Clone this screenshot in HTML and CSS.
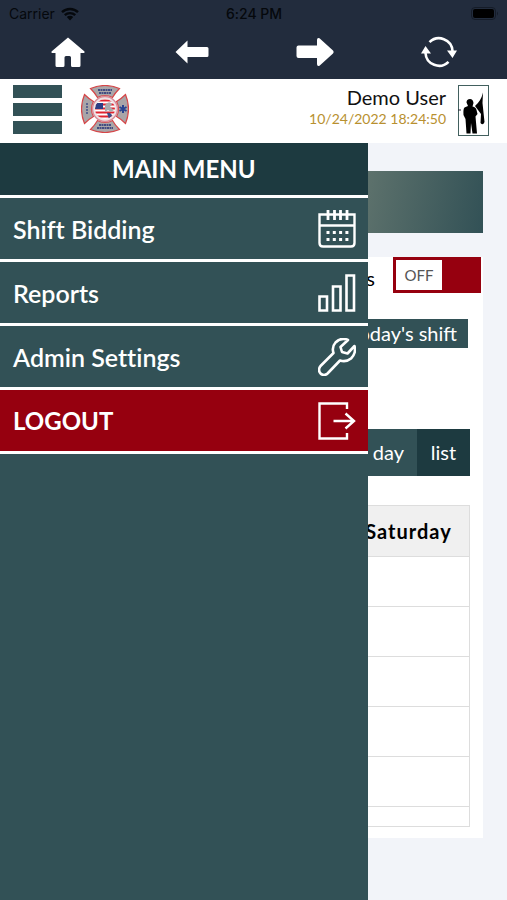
FILE: index.html
```html
<!DOCTYPE html>
<html lang="en">

<head>
    <meta charset="utf-8">
    <meta name="viewport" content="width=device-width, initial-scale=1">
    <title>Shift Calendar</title>
    <link rel="stylesheet" href="styles.css">
</head>

<body>

    <div class="statusbar">
        <div class="carrier">
            <span>Carrier</span>
            <svg width="18" height="14" viewBox="0 0 18 14">
                <path d="M1 5.2a11.5 11.5 0 0 1 16 0M3.8 8.2a7.5 7.5 0 0 1 10.4 0" fill="none" stroke="#05080c" stroke-width="2.4"/>
                <path d="M5.8 10.1a4.6 4.6 0 0 1 6.4 0L9 13.4z" fill="#05080c"/>
            </svg>
        </div>
        <div class="clock">6:24 PM</div>
        <div class="battery">
            <svg width="28" height="13" viewBox="0 0 28 13">
                <rect x="0.5" y="0.5" width="24" height="12" rx="3.5" fill="none" stroke="#151c28"/>
                <rect x="2" y="2" width="21" height="9" rx="2" fill="#000"/>
                <path d="M26 4.5q2 2 0 4z" fill="#151c28"/>
            </svg>
        </div>
    </div>

    <nav class="toolbar">
        <button aria-label="Home">
            <svg width="34" height="30" viewBox="0 0 34 30">
                <path d="M17 0.5L0.5 14.5Q0 16 1.5 16H4.500V28.500Q4.500 30 6 30H12Q13.500 30 13.500 28.500V20.500Q13.500 19 15 19H18.500Q20 19 20 20.500V28.500Q20 30 21.500 30H28Q29.500 30 29.500 28.500V16H32.500Q34 16 33.500 14.500z" fill="#fff"/>
            </svg>
        </button>
        <button aria-label="Back">
            <svg width="34" height="24" viewBox="0 0 34 24">
                <path d="M0.500 12L12.500 0.500V7H32Q33.500 7 33.500 8.500V15.500Q33.500 17 32 17H12.500V23.500z" fill="#fff"/>
            </svg>
        </button>
        <button aria-label="Forward">
            <svg width="38" height="30" viewBox="0 0 38 30">
                <path d="M37 13.600L23.500 1.300Q21 0.500 21 3V8.500H2.500Q0.500 8.500 0.500 10.500V19Q0.500 21 2.500 21H21V27Q21 29.500 23.500 28.700L37 16.400Q38.200 15 37 13.600z" fill="#fff"/>
            </svg>
        </button>
        <button aria-label="Reload">
            <svg width="36" height="32" viewBox="0 0 36 32">
                <path d="M8.500 6.200A13.500 13.500 0 0 1 31.500 15M27.500 25.800A13.500 13.500 0 0 1 4.500 17" fill="none" stroke="#fff" stroke-width="2.600"/>
                <path d="M26 14.500H36L31.500 22zM0 17.500H10L4.500 10z" fill="#fff"/>
            </svg>
        </button>
    </nav>

    <header class="topbar">
        <button class="burger" aria-label="Menu">
            <span></span>
            <span></span>
            <span></span>
        </button>
        <!-- fire department cross -->
        <svg class="emblem" width="48" height="48" viewBox="0 0 48 48">
            <defs>
                <path id="arm" d="M9.500 3.500Q24 -2.500 38.500 3.500Q34 8 31.500 12.500Q24 8.500 16.500 12.500Q14 8 9.500 3.500z"/>
                <clipPath id="disc"><circle cx="24" cy="24" r="10"/></clipPath>
            </defs>
            <g fill="#a9a5a8" stroke="#d64547" stroke-width="1.200">
                <use href="#arm"/>
                <use href="#arm" transform="rotate(90 24 24)"/>
                <use href="#arm" transform="rotate(180 24 24)"/>
                <use href="#arm" transform="rotate(270 24 24)"/>
            </g>
            <circle cx="24" cy="24" r="12.500" fill="#eee3e6" stroke="#d98c98" stroke-width="1.500"/>
            <g clip-path="url(#disc)">
                <rect x="14" y="14" width="20" height="20" fill="#fff"/>
                <path d="M14 15.500H34M14 19.500H34M14 23.500H34M14 27.500H34M14 31.500H34" stroke="#e02430" stroke-width="2"/>
                <rect x="14" y="18" width="8" height="6" fill="#2b3d84"/>
                <path d="M24 20q4-5 7-1l-2 3 4 3-3 2-3-2-3 2z" fill="#a9a9ac"/>
                <path d="M26 28q4-1 5 3l-3 3z" fill="#3c4a86"/>
            </g>
            <path d="M17 5H31M18 8H30M18 40H30M16 43H32" stroke="#434d82" stroke-width="2" stroke-dasharray="2 0.500"/>
            <path d="M6 18V30" stroke="#5c648f" stroke-width="2" stroke-dasharray="2 1"/>
            <path d="M42 20V28M38.500 22L45.500 26M38.500 26L45.500 22" stroke="#2a4491" stroke-width="2"/>
        </svg>
        <div class="user">
            <div class="username">Demo User</div>
            <div class="datetime">10/24/2022 18:24:50</div>
        </div>
        <svg class="profile" width="31" height="51" viewBox="0 0 31 51">
            <rect x="0.500" y="0.500" width="30" height="50" fill="#fff" stroke="#42605e"/>
            <path d="M8.500 17.500Q8.500 14 12 14Q15 14 15.500 18L14.500 21.500Q18 22 18.500 25L19.500 29L17.500 31.500L19 48.500H14.500L13 38L12.500 48.500H8.500L7.500 34L5.500 30Q5 24 6.500 22.500L10 21z" fill="#000"/>
            <path d="M25 7.500L24.500 18L26.500 37Q25 41 22.500 38L23 29L17 21Q23 16 25 7.500z" fill="#000"/>
            <path d="M0 25H3" stroke="#223"/>
        </svg>
    </header>

    <main class="page">

        <div class="banner"></div>

        <section class="card">
            <div class="switch-row">
                <label for="shifts">My Shifts</label>
                <button class="switch" id="shifts" role="switch" aria-checked="false"><span>OFF</span></button>
            </div>
            <div class="today-row">
                <button class="today">Today's shift</button>
            </div>
            <div class="views">
                <button>day</button>
                <button class="active">list</button>
            </div>
            <table class="calendar">
                <thead>
                    <tr>
                        <th></th>
                        <th class="dayname">Saturday</th>
                    </tr>
                </thead>
                <tbody>
                    <tr><td></td><td></td></tr>
                    <tr><td></td><td></td></tr>
                    <tr><td></td><td></td></tr>
                    <tr><td></td><td></td></tr>
                    <tr><td></td><td></td></tr>
                    <tr class="last"><td></td><td></td></tr>
                </tbody>
            </table>
        </section>

        <!-- slide out menu -->
        <aside class="menu">
            <h2>MAIN MENU</h2>
            <a href="#">
                <span>Shift Bidding</span>
                <svg width="38" height="38" viewBox="0 0 38 38" fill="none" stroke="#fff" stroke-width="2.400">
                    <path d="M1.500 4.500H36.500V33Q36.500 36.500 33 36.500H5Q1.500 36.500 1.500 33zM1 15.500H37"/>
                    <path d="M10 0V10M16.500 0V10M22.500 0V10M29 0V10" stroke-width="2.800"/>
                    <path d="M8.500 22.500H30.500M8.500 29.500H30.500" stroke-width="3" stroke-dasharray="3 3.300"/>
                </svg>
            </a>
            <a href="#">
                <span>Reports</span>
                <svg width="38" height="38" viewBox="0 0 38 38" fill="none" stroke="#fff" stroke-width="2.600">
                    <path d="M1.500 22.500H9V36.500H1.500zM15 12.500H22.500V36.500H15zM28.500 1.500H36V36.500H28.500z"/>
                </svg>
            </a>
            <a href="#">
                <span>Admin Settings</span>
                <svg width="38" height="38" viewBox="0 0 38 38" fill="none" stroke="#fff" stroke-width="2.600" stroke-linejoin="round">
                    <path d="M30 2Q23-1 17.500 4.500Q13.500 9 15.500 15L2.500 28Q-0.500 32 2.500 35.500Q6 38.500 9.500 35.500L22 22.500Q28 24.500 33 20.500Q38.500 15 36.500 8L29.500 15.500L24 14L22.500 9z"/>
                </svg>
            </a>
            <a href="#" class="logout">
                <span>LOGOUT</span>
                <svg width="38" height="38" viewBox="0 0 38 38" fill="none" stroke="#fff" stroke-width="2.400">
                    <path d="M29 7V1.500H1.500V36.500H29V31M15.500 19H36M27.500 11.500L36 19L27.500 26.500"/>
                </svg>
            </a>
        </aside>

    </main>

</body>

</html>
```

FILE: styles.css
```css
* {
    box-sizing: border-box;
}

body {
    margin: 0;
    min-height: 100vh;
    display: flex;
    flex-direction: column;
    font-family: Lato, sans-serif;
    font-variant-ligatures: none;
    background-color: #f2f4f9;
}

button {
    border: none;
    padding: 0;
    font-family: inherit;
    color: #fff;
    background: none;
}

svg {
    display: block;
}

.statusbar {
    display: grid;
    grid-template-columns: 1fr auto 1fr;
    align-items: center;
    height: 27px;
    padding: 0 8px 0 9px;
    font-family: Inter, sans-serif;
    font-size: 14px;
    color: #05080c;
    background-color: #222c3d;
}

.carrier {
    display: flex;
    align-items: center;
    gap: 6px;
}

.clock {
    font-weight: 500;
}

.battery {
    justify-self: end;
}

.toolbar {
    display: grid;
    grid-template-columns: repeat(4, 1fr);
    height: 52px;
    padding: 0 6px 2px;
    background-color: #222c3d;
}

.toolbar button {
    display: flex;
    align-items: center;
    justify-content: center;
}

.topbar {
    display: flex;
    align-items: flex-start;
    height: 64px;
    padding: 6px 18px 0 13px;
    background-color: #fff;
}

.burger {
    display: flex;
    flex-direction: column;
    gap: 5px;
    width: 49px;
}

.burger span {
    width: 100%;
    height: 13px;
    background-color: #325156;
}

.emblem {
    margin-left: 19px;
}

.user {
    flex: 1;
    margin-right: 12px;
    text-align: right;
}

.username {
    font-size: 20px;
    line-height: 24px;
    color: #111;
}

.datetime {
    font-size: 14px;
    line-height: 20px;
    color: #b8902f;
}

.page {
    position: relative;
    flex: 1;
    padding: 28px 24px 40px;
}

.banner {
    height: 62px;
    margin-bottom: 24px;
    background: linear-gradient(100deg, #325156, #5f736d 72%, #325156);
}

.card {
    padding: 0 13px 11px;
    background-color: #fff;
}

.switch-row {
    display: flex;
    justify-content: flex-end;
    align-items: center;
    gap: 18px;
    margin-right: -11px;
}

.switch-row label {
    padding-top: 6px;
    font-size: 20px;
}

.switch {
    display: flex;
    width: 88px;
    height: 36px;
    padding: 3px;
    background-color: #96000f;
}

.switch span {
    width: 46px;
    font-size: 15px;
    line-height: 30px;
    color: #555;
    background-color: #fff;
}

.today-row {
    display: flex;
    justify-content: flex-end;
    margin: 26px 2px 81px 0;
}

.today {
    height: 29px;
    padding: 0 11px 2px;
    font-size: 20px;
    background-color: #325156;
}

.views {
    display: flex;
    justify-content: flex-end;
    margin-bottom: 29px;
}

.views button {
    height: 47px;
    padding: 0 13px 2px;
    font-size: 20px;
    background-color: #325156;
}

.views .active {
    width: 53px;
    background-color: #1d3a40;
}

.calendar {
    width: 100%;
    border-collapse: collapse;
    table-layout: fixed;
}

.calendar th,
.calendar td {
    height: 50px;
    padding: 0;
    border: 1px solid #ddd;
}

.calendar th {
    height: 51px;
    font-size: 20px;
    letter-spacing: 1px;
    background-color: #f0f0f0;
}

.calendar .dayname {
    width: 122px;
}

.calendar .last td {
    height: 20px;
}

.menu {
    position: absolute;
    top: 0;
    bottom: 0;
    left: 0;
    width: 72.5%;
    background-color: #325156;
}

.menu h2 {
    margin: 0;
    border-bottom: 3px solid #fff;
    font-size: 24px;
    font-weight: bold;
    line-height: 51px;
    padding-bottom: 1px;
    text-align: center;
    color: #fff;
    background-color: #1d3a40;
}

.menu a {
    display: flex;
    align-items: center;
    justify-content: space-between;
    height: 64px;
    padding: 0 12px 0 13px;
    border-bottom: 3px solid #fff;
    font-size: 25px;
    font-weight: 600;
    text-decoration: none;
    color: #fff;
}

.menu .logout {
    font-size: 24px;
    font-weight: bold;
    background-color: #96000f;
}
```
